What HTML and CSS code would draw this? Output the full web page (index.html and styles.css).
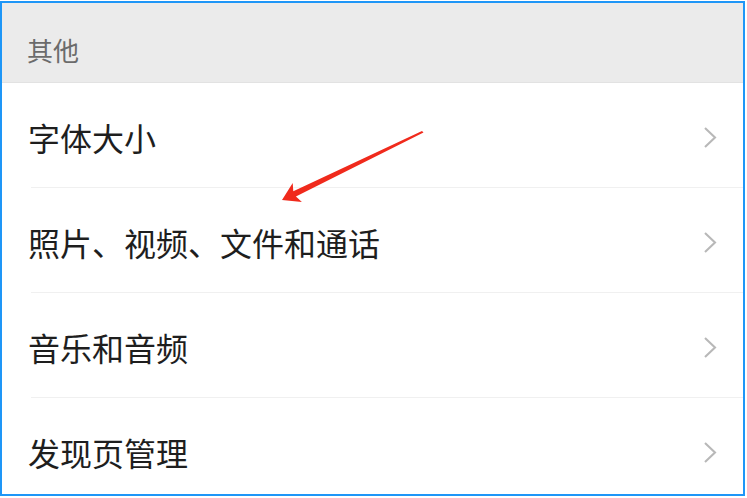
FILE: index.html
```html
<!DOCTYPE html>
<html lang="zh-CN">
<head>
<meta charset="utf-8">
<title>其他</title>
<link rel="stylesheet" href="styles.css">
</head>
<body>
<div class="frame">
  <div class="section-header">其他</div>
  <div class="row"><span class="label">字体大小</span><svg class="chev" width="14" height="23" viewBox="0 0 14 23"><polyline points="2,2 12,11.5 2,21" /></svg></div>
  <div class="row"><span class="label">照片、视频、文件和通话</span><svg class="chev" width="14" height="23" viewBox="0 0 14 23"><polyline points="2,2 12,11.5 2,21" /></svg></div>
  <div class="row"><span class="label">音乐和音频</span><svg class="chev" width="14" height="23" viewBox="0 0 14 23"><polyline points="2,2 12,11.5 2,21" /></svg></div>
  <div class="row"><span class="label">发现页管理</span><svg class="chev" width="14" height="23" viewBox="0 0 14 23"><polyline points="2,2 12,11.5 2,21" /></svg></div>
</div>
<svg class="arrow" width="747" height="498" viewBox="0 0 747 498">
  <polygon points="422,131 423.5,132.5 295.9,196.6 301.9,202 282,200 292.7,183.1 293.3,191.2" />
</svg>
</body>
</html>
```
FILE: styles.css
```css
html, body {
  margin: 0;
  padding: 0;
  background: #ffffff;
}
body {
  width: 747px;
  height: 498px;
  overflow: hidden;
  font-family: "Noto Sans CJK SC", "Noto Sans", sans-serif;
}
.frame {
  box-sizing: border-box;
  margin-top: 1px;
  width: 745px;
  height: 495px;
  border: 2px solid #1e96f7;
  overflow: hidden;
  background: #ffffff;
}
.section-header {
  box-sizing: border-box;
  height: 80px;
  padding: 15px 0 0 25px;
  display: flex;
  align-items: center;
  background: #ebebeb;
  border-bottom: 1px solid #e2e2e2;
  color: #6b6b6b;
  font-size: 26px;
  line-height: 26px;
}
.row {
  box-sizing: border-box;
  height: 105px;
  margin-left: 29px;
  padding: 4px 26px 0 0;
  display: flex;
  align-items: center;
  justify-content: space-between;
  border-bottom: 1px solid #f0f0f0;
}
.label {
  margin-left: -3px;
  font-size: 32px;
  line-height: 32px;
  color: #1e1e1e;
}
.chev {
  flex: none;
}
.chev polyline {
  fill: none;
  stroke: #b8b8b8;
  stroke-width: 2.1;
}
.arrow {
  position: absolute;
  left: 0;
  top: 0;
  pointer-events: none;
}
.arrow polygon {
  fill: #f02a1c;
}
```
